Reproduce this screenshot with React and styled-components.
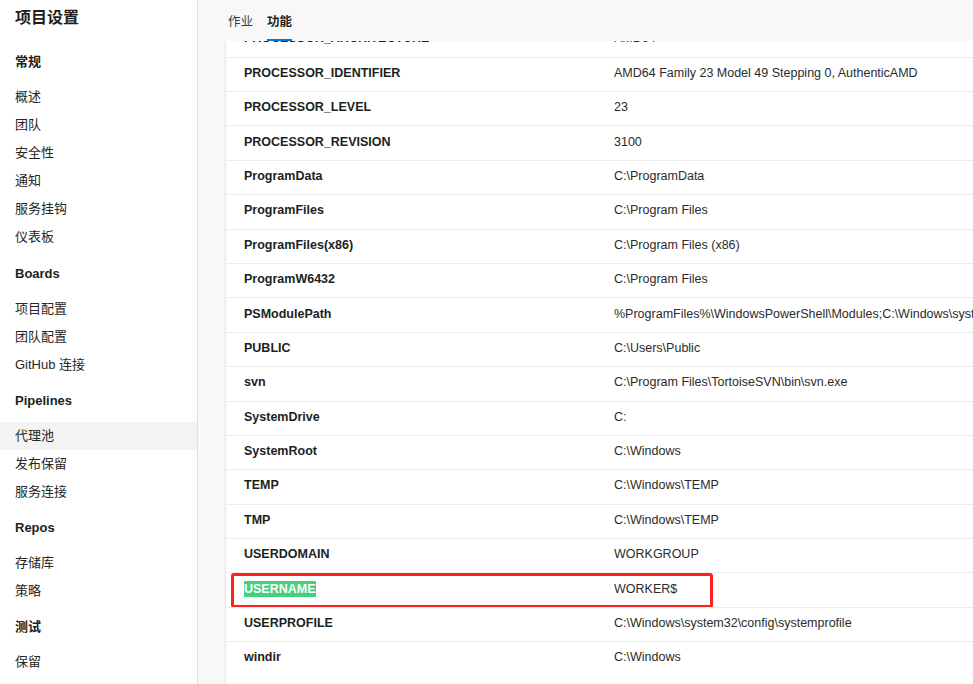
import React from "react";
import styled, { createGlobalStyle } from "styled-components";

const GlobalStyle = createGlobalStyle`
  html, body {
    margin: 0;
    padding: 0;
    height: 100%;
    overflow: hidden;
  }
  body {
    font-family: "Liberation Sans", "Noto Sans CJK SC", sans-serif;
    color: #201f1e;
    background: #f8f8f8;
  }
  #root {
    height: 100%;
  }
`;

const navSections = [
  { title: "常规", items: ["概述", "团队", "安全性", "通知", "服务挂钩", "仪表板"] },
  { title: "Boards", items: ["项目配置", "团队配置", "GitHub 连接"] },
  { title: "Pipelines", items: ["代理池", "发布保留", "服务连接"] },
  { title: "Repos", items: ["存储库", "策略"] },
  { title: "测试", items: ["保留"] },
];

const rows = [
  ["PROCESSOR_ARCHITECTURE", "AMD64"],
  ["PROCESSOR_IDENTIFIER", "AMD64 Family 23 Model 49 Stepping 0, AuthenticAMD"],
  ["PROCESSOR_LEVEL", "23"],
  ["PROCESSOR_REVISION", "3100"],
  ["ProgramData", "C:\\ProgramData"],
  ["ProgramFiles", "C:\\Program Files"],
  ["ProgramFiles(x86)", "C:\\Program Files (x86)"],
  ["ProgramW6432", "C:\\Program Files"],
  ["PSModulePath", "%ProgramFiles%\\WindowsPowerShell\\Modules;C:\\Windows\\system32\\WindowsPowerShell\\v1.0\\Modules"],
  ["PUBLIC", "C:\\Users\\Public"],
  ["svn", "C:\\Program Files\\TortoiseSVN\\bin\\svn.exe"],
  ["SystemDrive", "C:"],
  ["SystemRoot", "C:\\Windows"],
  ["TEMP", "C:\\Windows\\TEMP"],
  ["TMP", "C:\\Windows\\TEMP"],
  ["USERDOMAIN", "WORKGROUP"],
  ["USERNAME", "WORKER$"],
  ["USERPROFILE", "C:\\Windows\\system32\\config\\systemprofile"],
  ["windir", "C:\\Windows"],
];

const App = () => {
  return (
    <>
      <GlobalStyle />
      <Layout>
        <Sidebar>
          <SidebarTitle>项目设置</SidebarTitle>
          {navSections.map((section) => (
            <Section key={section.title}>
              <SectionTitle>{section.title}</SectionTitle>
              <NavList>
                {section.items.map((item) => (
                  <NavItem key={item} $active={item === "代理池"}>
                    {item}
                  </NavItem>
                ))}
              </NavList>
            </Section>
          ))}
        </Sidebar>

        <Main>
          <Header>
            <Tab>作业</Tab>
            <Tab $active>功能</Tab>
          </Header>
          <Body>
            <Card>
              {rows.map(([key, value]) => {
                const marked = key === "USERNAME";
                return (
                  <Row key={key}>
                    <KeyCell>{marked ? <Highlight>{key}</Highlight> : key}</KeyCell>
                    <ValueCell>{value}</ValueCell>
                    {marked && <RedBox />}
                  </Row>
                );
              })}
            </Card>
          </Body>
        </Main>
      </Layout>
    </>
  );
};

export default App;

const Layout = styled.div`
  display: flex;
  height: 100%;
  width: 100%;
  overflow: hidden;
`;

const Sidebar = styled.nav`
  width: 197px;
  flex-shrink: 0;
  background: #ffffff;
  border-right: 1px solid #e1e1e1;
  display: flex;
  flex-direction: column;
`;

const SidebarTitle = styled.div`
  padding: 0 15px;
  height: 36px;
  line-height: 36px;
  font-size: 16px;
  font-weight: 700;
  margin-bottom: 4px;
`;

const Section = styled.div`
  margin-top: 8px;
`;

const SectionTitle = styled.div`
  padding: 0 15px;
  height: 28px;
  line-height: 28px;
  font-size: 13px;
  font-weight: 700;
  margin-bottom: 7px;
`;

const NavList = styled.div`
  display: flex;
  flex-direction: column;
`;

const NavItem = styled.div`
  padding: 0 15px;
  height: 28.1px;
  line-height: 28.1px;
  font-size: 13px;
  color: #262626;
  background: ${(p) => (p.$active ? "#f3f3f3" : "transparent")};
`;

const Main = styled.main`
  flex: 1;
  min-width: 0;
  display: flex;
  flex-direction: column;
  background: #f8f8f8;
  overflow: hidden;
`;

const Header = styled.div`
  position: relative;
  z-index: 2;
  height: 41px;
  flex-shrink: 0;
  display: flex;
  align-items: stretch;
  gap: 14px;
  padding-left: 30px;
  background: #f8f8f8;
`;

const Tab = styled.div`
  position: relative;
  display: flex;
  align-items: center;
  font-size: 12.5px;
  color: ${(p) => (p.$active ? "#201f1e" : "#3b3b3b")};
  font-weight: ${(p) => (p.$active ? 700 : 400)};

  &::after {
    content: "";
    display: ${(p) => (p.$active ? "block" : "none")};
    position: absolute;
    left: 0;
    right: 0;
    bottom: 0;
    height: 2px;
    background: #0078d4;
  }
`;

const Body = styled.div`
  flex: 1;
  overflow: hidden;
  padding-left: 28px;
`;

const Card = styled.div`
  width: 1000px;
  margin-top: -18.8px;
  padding-bottom: 60px;
  background: #ffffff;
  box-shadow: 0 0 3px rgba(0, 0, 0, 0.12), 0 1px 2px rgba(0, 0, 0, 0.06);
`;

const Row = styled.div`
  position: relative;
  display: grid;
  grid-template-columns: 388px 1fr;
  align-items: center;
  height: 34.4px;
  box-sizing: border-box;
  padding-bottom: 3px;
  border-top: 1px solid #ececec;
  font-size: 12.5px;

  &:first-child {
    border-top: none;
  }
`;

const KeyCell = styled.div`
  padding-left: 18px;
  font-weight: 700;
  color: #201f1e;
  white-space: nowrap;
`;

const ValueCell = styled.div`
  color: #2b2b2b;
  white-space: nowrap;
  overflow: hidden;
`;

const Highlight = styled.span`
  background: #45d07c;
  color: #ffffff;
  padding: 1px 0;
`;

const RedBox = styled.div`
  position: absolute;
  left: 5px;
  top: 0;
  width: 482px;
  bottom: -1px;
  box-sizing: border-box;
  border: 3px solid #ff1f1f;
  border-radius: 3px;
  pointer-events: none;
`;
